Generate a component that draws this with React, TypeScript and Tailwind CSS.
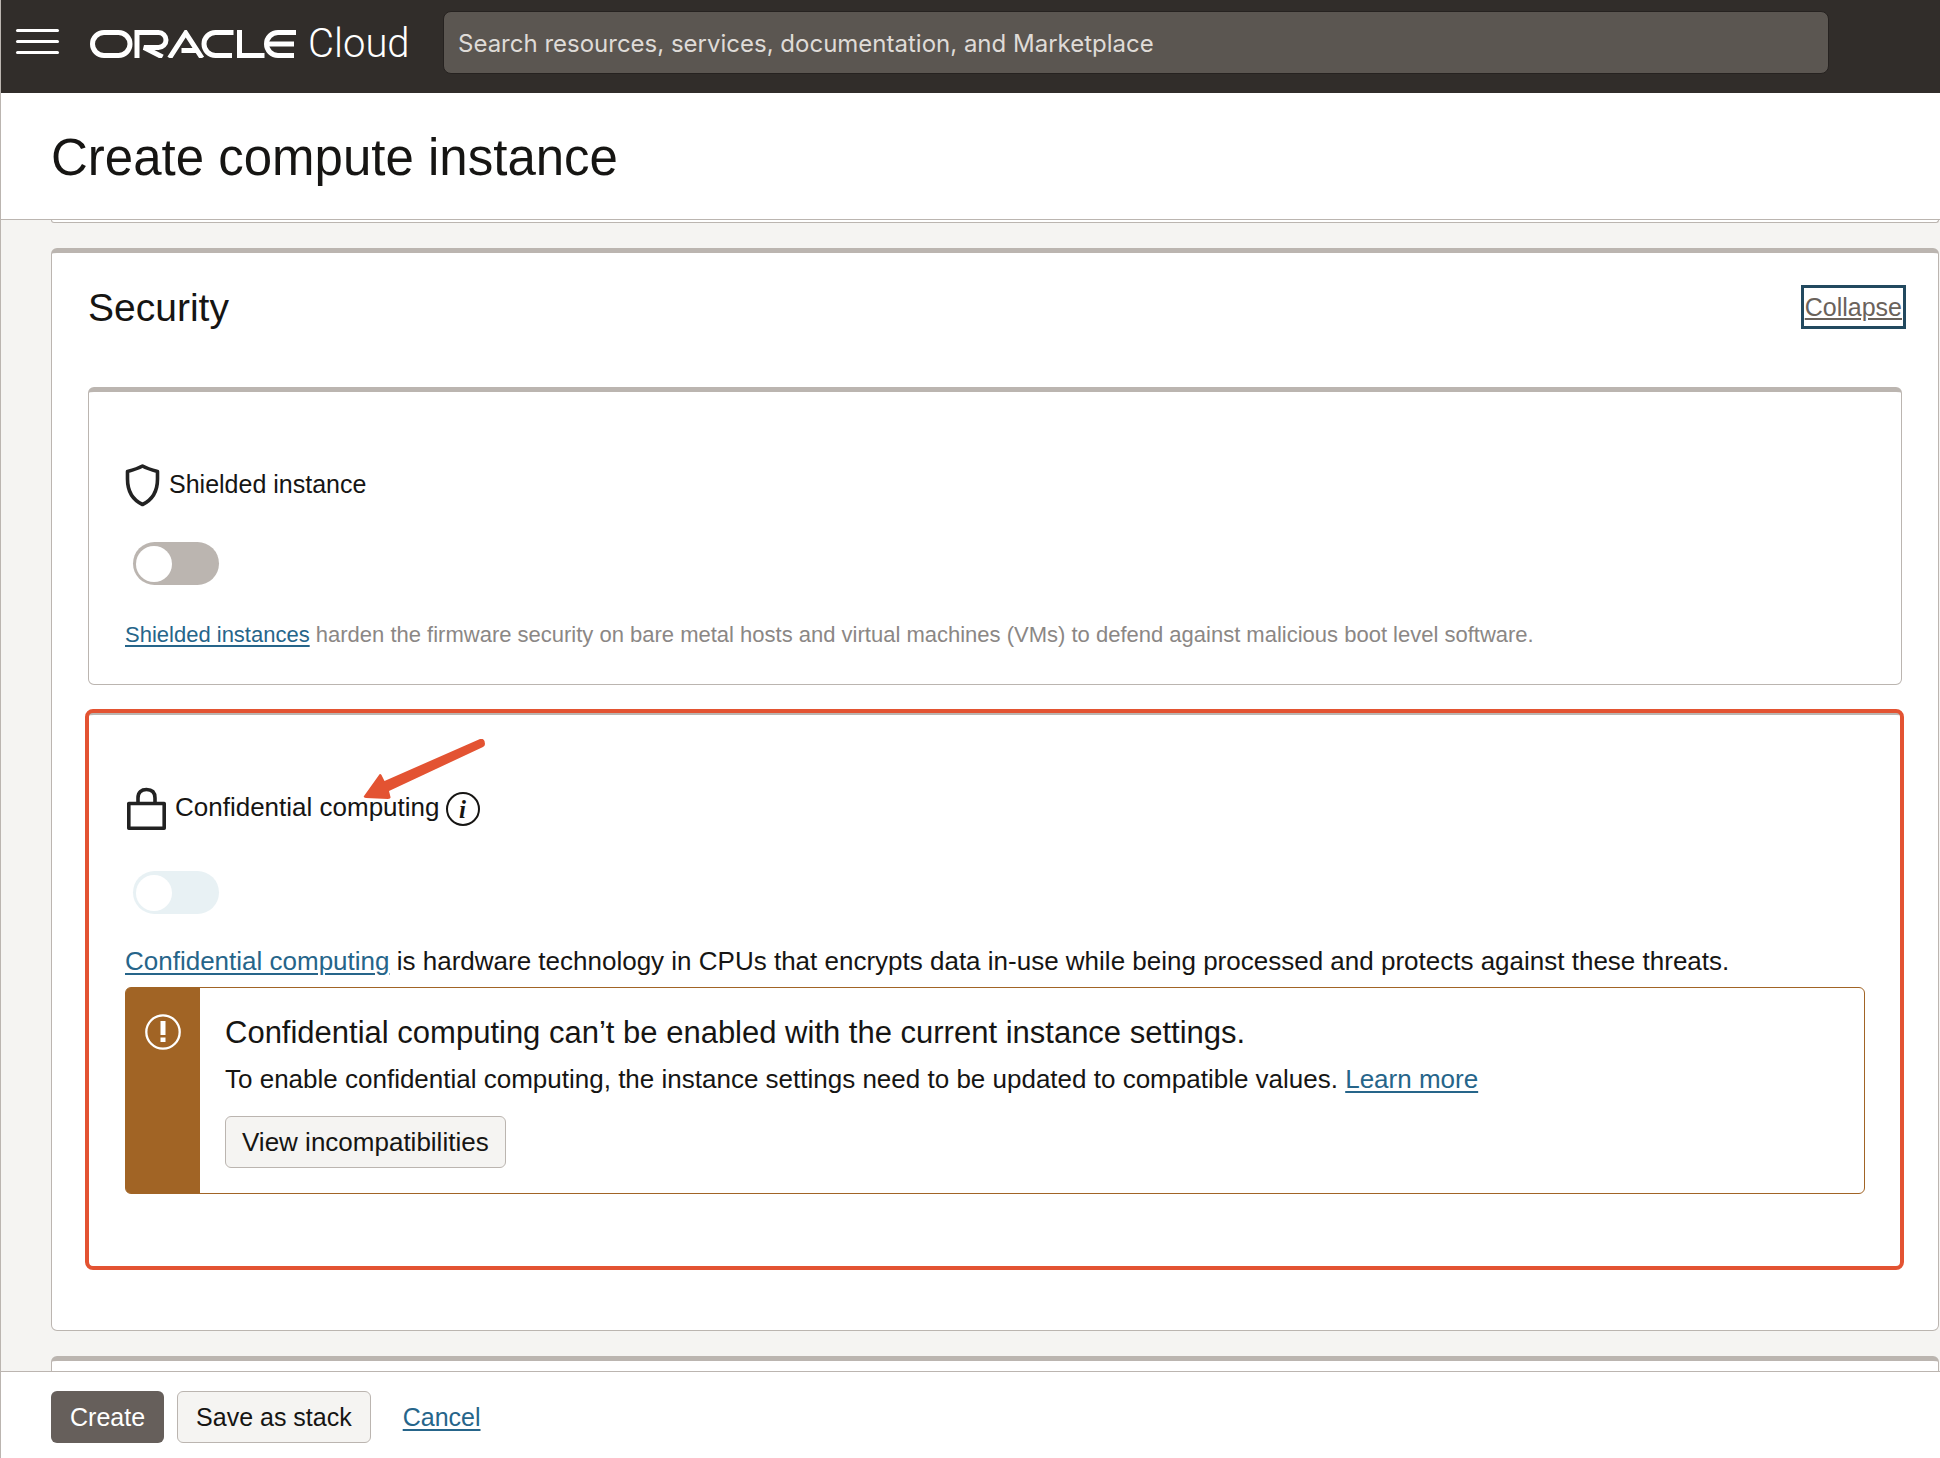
import type { ReactNode } from "react";

const link = "text-[#26658a] underline decoration-2 underline-offset-[3px]";
const lightButton =
  "h-[52px] rounded-md border border-[#bbb5b0] bg-[#f5f4f2] leading-[30px]";

function OracleMark() {
  return (
    <svg
      className="h-[28px] w-[207px]"
      viewBox="0 0 207 28"
      fill="none"
      stroke="#fff"
      strokeWidth="5"
      aria-label="Oracle"
      role="img"
    >
      <path d="M14 2.500H28.500A11.500 11.500 0 0 1 28.500 25.500H14A11.500 11.500 0 0 1 14 2.500Z" />
      <path d="M47 28V2.500H68.500A7.500 7.500 0 0 1 68.500 17.500H54L72.500 27" />
      <path d="M79.500 28L95.700 3L112 28M91.500 20.500H106" />
      <path d="M143.500 2.500H125.500A11.500 11.500 0 0 0 125.500 25.500H142" />
      <path d="M149.500 0V25.500H174.500" />
      <path d="M206 2.500H188A11.500 11.500 0 0 0 188 25.500H204M178 14H204" />
    </svg>
  );
}

function Switch({ label, disabled = false }: { label: string; disabled?: boolean }) {
  return (
    <label className="relative ml-2 block h-[43px] w-[86px]">
      <input
        type="checkbox"
        role="switch"
        aria-label={label}
        disabled={disabled}
        className="peer block h-[43px] w-[86px] appearance-none rounded-full bg-[#bbb5b0] disabled:bg-[#e8f1f4]"
      />
      <span className="absolute top-1 left-[3px] size-9 rounded-full bg-white peer-checked:left-[47px]" />
    </label>
  );
}

function Panel({ children, className }: { children?: ReactNode; className: string }) {
  return (
    <section
      className={`relative rounded-md border border-t-[5px] border-[#bbb5b0] bg-white ${className}`}
    >
      {children}
    </section>
  );
}

export default function App() {
  return (
    <div className="flex h-screen flex-col overflow-hidden border-l border-[#bbb5b0] bg-white font-['Liberation_Sans',Arial,sans-serif] text-[#161513]">
      <header className="-ml-px flex h-[93px] shrink-0 items-start bg-[#312d2a] pr-[111px] pl-4">
        <button aria-label="Menu" className="mt-[29px] flex w-[43px] flex-col gap-2">
          <span className="h-[3px] w-full rounded-full bg-white" />
          <span className="h-[3px] w-full rounded-full bg-white" />
          <span className="h-[3px] w-full rounded-full bg-white" />
        </button>
        <a href="#home" className="mt-6 ml-[31px] flex h-10 w-[353px] items-center gap-[11px] text-white">
          <OracleMark />
          <span className="font-['Roboto',sans-serif] text-[40px] leading-10 font-light">Cloud</span>
        </a>
        <input
          type="search"
          aria-label="Search"
          placeholder="Search resources, services, documentation, and Marketplace"
          className="mt-[11px] h-[63px] min-w-0 flex-1 rounded-lg border border-[#262220] bg-[#5b5651] px-3.5 pt-0.5 font-['Inter',sans-serif] text-[24px] text-white placeholder:text-[#dfdbd7]"
        />
      </header>

      <div className="flex h-[127px] shrink-0 items-center border-b border-[#bbb5b0] pt-[3px] pl-[50px]">
        <h1 className="text-[51px] leading-[60px]">Create compute instance</h1>
      </div>

      <main className="min-h-0 flex-1 overflow-hidden bg-[#f5f4f2] pr-px pl-[50px]">
        <div className="h-[3px] rounded-b-md border border-t-0 border-[#bbb5b0] bg-white" />
        <Panel className="mt-[25px] px-9 pb-[62px]">
          <div className="flex items-center justify-between pt-8">
            <h2 className="pt-0.5 text-[39px] leading-[42px]">Security</h2>
            <button className="-mr-1 h-11 border-[3px] border-[#22495f] px-px text-[25px] leading-[30px] text-[#6a625b] underline decoration-2 underline-offset-2">
              Collapse
            </button>
          </div>

          <Panel className="mt-[58px] px-9 pt-[71px] pb-[35px]">
            <div className="flex items-center gap-2">
              <svg className="h-[44px] w-[36px]" viewBox="0 0 36 44" fill="none" stroke="#222" strokeWidth="3.600" strokeLinejoin="round">
                <path d="M17.500 3C13 5.500 8 7 2.500 8.500V16C2.500 28 8 37 17.500 41.500C27 37 32.500 28 32.500 16V8.500C27 7 22 5.500 17.500 3Z" />
              </svg>
              <h3 className="pb-0.5 text-[25px] leading-[30px]">Shielded instance</h3>
            </div>
            <div className="mt-[35px]">
              <Switch label="Shielded instance" />
            </div>
            <p className="mt-9 text-[22px] leading-7 text-[#8b8785]">
              <a href="#shielded" className={link}>Shielded instances</a> harden the firmware security on bare metal hosts and virtual machines (VMs) to defend against malicious boot level software.
            </p>
          </Panel>

          <Panel className="mt-[25px] px-9 pt-[72px] pb-[73px]">
            <div className="pointer-events-none absolute -top-1.5 -right-[3px] -bottom-[3px] -left-1 rounded-lg border-4 border-[#e35332]" />
            <svg className="absolute top-6 left-[273px] z-10 h-16 w-[126px]" viewBox="0 0 126 64" fill="#e35332">
              <path d="M2 57L17 36Q18 34 19.500 36L22.500 42L118 0Q121 -1 122.500 2L123 5Q123 7 121 8L27 52L28.500 58Q29 60 26 60L4 59Q1 58.500 2 57Z" />
            </svg>
            <div className="flex items-center">
              <svg className="mr-2 h-[44px] w-[42px]" viewBox="0 0 42 44" fill="none" stroke="#222" strokeWidth="3.600" strokeLinejoin="round">
                <path d="M3.800 16.500H39.200V41.200H3.800ZM13 16V11C13 5 16.500 2.500 21.500 2.500S30 5 30 11V16" />
              </svg>
              <h3 className="pb-1 text-[26px] leading-[30px]">Confidential computing</h3>
              <button aria-label="About confidential computing" className="ml-1.5 flex size-[34px] items-center justify-center rounded-full border-2 border-[#161513] font-['Liberation_Serif',serif] text-[25px] leading-none font-bold italic">
                i
              </button>
            </div>
            <div className="mt-10">
              <Switch label="Confidential computing" disabled />
            </div>
            <p className="mt-8 text-[26px] leading-[30px]">
              <a href="#confidential" className={link}>Confidential computing</a> is hardware technology in CPUs that encrypts data in-use while being processed and protects against these threats.
            </p>
            <div role="alert" className="mt-[11px] flex rounded-md border border-[#a16425]">
              <div className="flex w-[74px] shrink-0 justify-center rounded-l-sm bg-[#a16425] pt-[26px]">
                <svg className="size-9" viewBox="0 0 36 36" fill="none" stroke="#fff">
                  <circle cx="18" cy="18" r="16.700" strokeWidth="2.300" />
                  <path d="M18 7V21M18 23.500V28" strokeWidth="5" />
                </svg>
              </div>
              <div className="px-[25px] pt-[27px] pb-[25px]">
                <h4 className="text-[31px] leading-9">Confidential computing can’t be enabled with the current instance settings.</h4>
                <p className="mt-[13px] text-[26px] leading-[30px]">
                  To enable confidential computing, the instance settings need to be updated to compatible values. <a href="#learn" className={link}>Learn more</a>
                </p>
                <button className={`mt-[22px] px-4 text-[26px] ${lightButton}`}>View incompatibilities</button>
              </div>
            </div>
          </Panel>
        </Panel>
        <Panel className="mt-[25px] h-20" />
      </main>

      <footer className="flex h-[87px] shrink-0 items-start border-t border-[#bbb5b0] pt-[19px] pl-[50px]">
        <button className="h-[52px] rounded-md bg-[#665f5b] px-[19px] text-[25px] leading-[30px] text-white">Create</button>
        <button className={`ml-[13px] px-[18px] text-[25px] ${lightButton}`}>Save as stack</button>
        <a href="#cancel" className={`mt-[11px] ml-8 text-[25px] leading-[30px] ${link}`}>Cancel</a>
      </footer>
    </div>
  );
}
